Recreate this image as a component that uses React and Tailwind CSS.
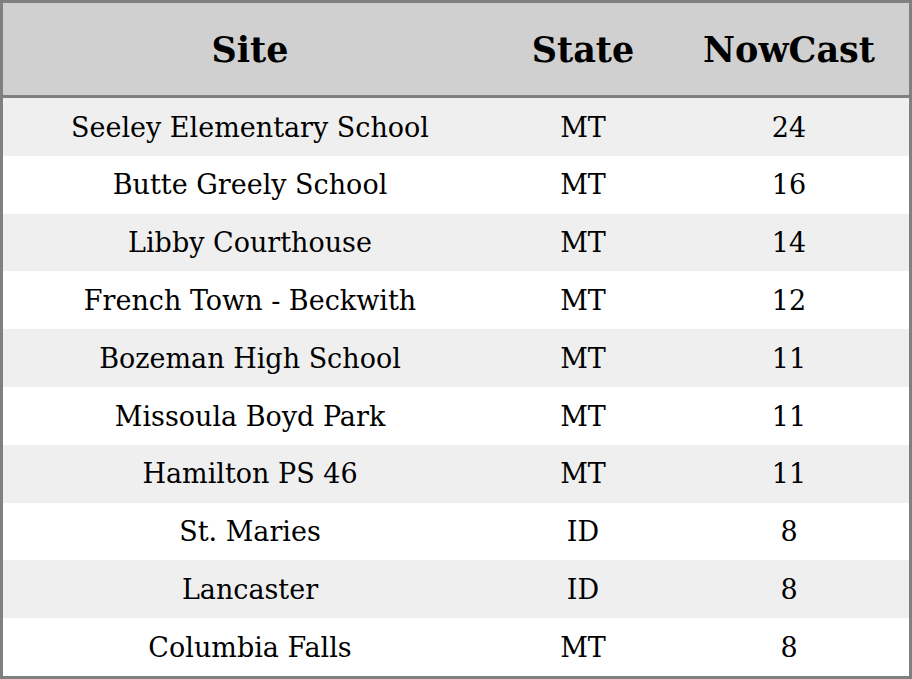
import React from 'react';

const rows = [
  ['Seeley Elementary School', 'MT', '24'],
  ['Butte Greely School', 'MT', '16'],
  ['Libby Courthouse', 'MT', '14'],
  ['French Town - Beckwith', 'MT', '12'],
  ['Bozeman High School', 'MT', '11'],
  ['Missoula Boyd Park', 'MT', '11'],
  ['Hamilton PS 46', 'MT', '11'],
  ['St. Maries', 'ID', '8'],
  ['Lancaster', 'ID', '8'],
  ['Columbia Falls', 'MT', '8'],
];

export default function App() {
  return (
    <div
      className="w-[912px] h-[679px] border-[3px] border-[#808080] flex flex-col bg-white text-black"
      style={{ fontFamily: '"DejaVu Serif", serif' }}
    >
      <div className="h-[95px] shrink-0 grid grid-cols-[494px_172px_1fr] items-center pt-[3px] bg-[#d0d0d0] border-b-[3px] border-[#808080] text-[35px] font-bold">
        <div className="text-center">Site</div>
        <div className="text-center">State</div>
        <div className="text-center">NowCast</div>
      </div>
      {rows.map((r, i) => (
        <div
          key={i}
          className={`flex-1 grid grid-cols-[494px_172px_1fr] items-center pt-[2px] text-[27px] ${i % 2 === 0 ? 'bg-[#efefef]' : 'bg-white'}`}
        >
          <div className="text-center">{r[0]}</div>
          <div className="text-center">{r[1]}</div>
          <div className="text-center">{r[2]}</div>
        </div>
      ))}
    </div>
  );
}
